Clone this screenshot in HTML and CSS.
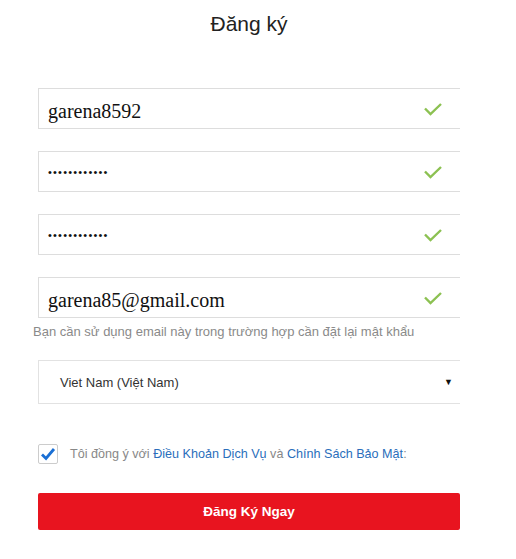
FILE: index.html
```html
<!DOCTYPE html>
<html lang="vi">
<head>
  <meta charset="UTF-8">
  <meta name="viewport" content="width=device-width, initial-scale=1.0">
  <title>Đăng ký</title>
  <link rel="stylesheet" href="styles.css">
</head>
<body>
  <main class="page">
    <h1>Đăng ký</h1>

    <div class="field">
      <span class="value">garena8592</span>
      <svg class="ok" width="20" height="14" viewBox="0 0 20 14"><path d="M2 6.5 L7.5 12 L18 2" fill="none" stroke="#8cc152" stroke-width="2.4"/></svg>
    </div>
    <div class="field">
      <span class="dots">••••••••••••</span>
      <svg class="ok" width="20" height="14" viewBox="0 0 20 14"><path d="M2 6.5 L7.5 12 L18 2" fill="none" stroke="#8cc152" stroke-width="2.4"/></svg>
    </div>
    <div class="field">
      <span class="dots">••••••••••••</span>
      <svg class="ok" width="20" height="14" viewBox="0 0 20 14"><path d="M2 6.5 L7.5 12 L18 2" fill="none" stroke="#8cc152" stroke-width="2.4"/></svg>
    </div>
    <div class="field field-email">
      <span class="value">garena85@gmail.com</span>
      <svg class="ok" width="20" height="14" viewBox="0 0 20 14"><path d="M2 6.5 L7.5 12 L18 2" fill="none" stroke="#8cc152" stroke-width="2.4"/></svg>
    </div>
    <p class="hint">Bạn cần sử dụng email này trong trường hợp cần đặt lại mật khẩu</p>

    <div class="select">
      <span>Viet Nam (Việt Nam)</span>
      <span class="arrow">▼</span>
    </div>

    <label class="agree">
      <span class="box">
        <svg width="16" height="14" viewBox="0 0 16 14"><path d="M2 7.5 L6 11.5 L14 2" fill="none" stroke="#1a6fd4" stroke-width="2.8"/></svg>
      </span>
      <span>Tôi đồng ý với <a href="#">Điều Khoản Dịch Vụ</a> và <a href="#">Chính Sách Bảo Mật</a>:</span>
    </label>

    <button type="button" class="button">Đăng Ký Ngay</button>
  </main>
</body>
</html>
```

FILE: styles.css
```css
body {
  font-family: 'Liberation Sans', Arial, sans-serif;
  margin: 0;
  background: #fff;
}

* {
  box-sizing: border-box;
}

.page {
  width: 422px;
  margin-left: 38px;
}

h1 {
  font-size: 21px;
  font-weight: normal;
  color: #222;
  text-align: center;
  line-height: 24px;
  margin: 12px 0 52px;
}

.field {
  display: flex;
  align-items: center;
  justify-content: space-between;
  height: 41px;
  padding: 0 17px 0 9px;
  border: 1px solid #ddd;
  border-right: 0;
  margin-bottom: 22px;
}

.field-email {
  margin-bottom: 0;
}

.value {
  font-family: 'Liberation Serif', 'Times New Roman', serif;
  font-size: 20px;
  color: #111;
  padding-top: 5px;
}

.dots {
  font-size: 11px;
  letter-spacing: 1.2px;
  color: #111;
}

.hint {
  margin: 5px 0 0 -5px;
  font-size: 13px;
  color: #8a8a8a;
  white-space: nowrap;
  line-height: 18px;
}

.select {
  display: flex;
  align-items: center;
  justify-content: space-between;
  height: 44px;
  margin-top: 19px;
  padding: 0 7px 0 21px;
  border: 1px solid #e2e2e2;
  border-right: 0;
  font-size: 13px;
  color: #333;
}

.arrow {
  font-size: 9px;
  color: #111;
}

.agree {
  display: flex;
  align-items: center;
  gap: 12px;
  margin-top: 40px;
  font-size: 12.6px;
  color: #888;
}

.box {
  display: flex;
  align-items: center;
  justify-content: center;
  width: 20px;
  height: 20px;
  border: 1px solid #ccc;
  border-radius: 2px;
}

.agree a {
  color: #2a6ebb;
  text-decoration: none;
}

.button {
  display: block;
  width: 100%;
  height: 37px;
  margin-top: 29px;
  border: 0;
  border-radius: 2px;
  background-color: #e8141f;
  color: #fff;
  font-family: 'Liberation Sans', Arial, sans-serif;
  font-size: 13.5px;
  font-weight: bold;
  cursor: pointer;
}
```
